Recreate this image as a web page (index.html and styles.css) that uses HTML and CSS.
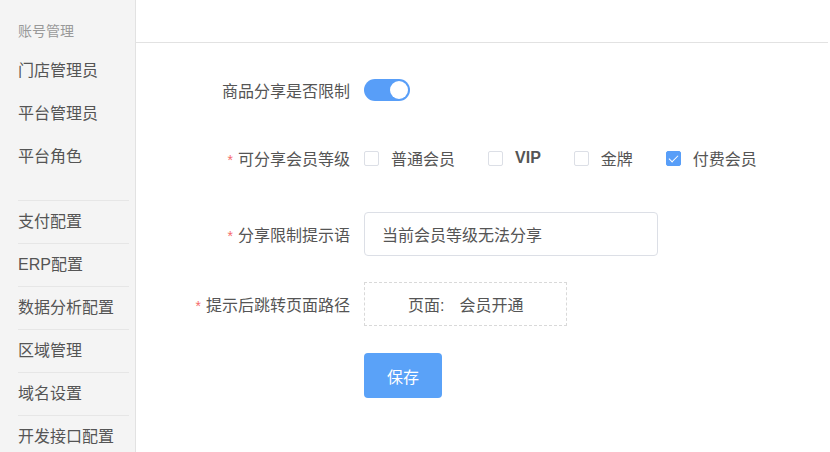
FILE: index.html
```html
<!DOCTYPE html>
<html lang="zh-CN">
<head>
    <meta charset="UTF-8">
    <meta name="viewport" content="width=device-width, initial-scale=1.0">
    <title>商品分享设置</title>
    <link rel="stylesheet" href="styles.css">
</head>
<body>
    <aside class="sidebar">
        <div class="menu-title">账号管理</div>
        <ul class="menu">
            <li>门店管理员</li>
            <li>平台管理员</li>
            <li>平台角色</li>
        </ul>
        <ul class="menu menu-lined">
            <li>支付配置</li>
            <li>ERP配置</li>
            <li>数据分析配置</li>
            <li>区域管理</li>
            <li>域名设置</li>
            <li>开发接口配置</li>
        </ul>
    </aside>

    <main class="main">
        <div class="topbar"></div>

        <form class="form" id="share-form">
            <div class="form-item item-switch">
                <label class="form-label">商品分享是否限制</label>
                <div class="form-control">
                    <span class="switch is-on" id="share-switch"><span class="switch-knob"></span></span>
                </div>
            </div>

            <div class="form-item item-levels">
                <label class="form-label"><span class="required">*</span>可分享会员等级</label>
                <div class="form-control">
                    <label class="checkbox"><span class="checkbox-box"></span>普通会员</label>
                    <label class="checkbox"><span class="checkbox-box"></span><b class="vip">VIP</b></label>
                    <label class="checkbox"><span class="checkbox-box"></span>金牌</label>
                    <label class="checkbox is-checked"><span class="checkbox-box"></span>付费会员</label>
                </div>
            </div>

            <div class="form-item item-tip">
                <label class="form-label"><span class="required">*</span>分享限制提示语</label>
                <div class="form-control">
                    <input class="text-input" type="text" value="当前会员等级无法分享">
                </div>
            </div>

            <div class="form-item item-path">
                <label class="form-label"><span class="required">*</span>提示后跳转页面路径</label>
                <div class="form-control">
                    <div class="path-box"><span class="path-key">页面:</span>会员开通</div>
                </div>
            </div>

            <div class="form-item item-save">
                <div class="form-label"></div>
                <div class="form-control">
                    <button type="button" class="btn-primary">保存</button>
                </div>
            </div>
        </form>
    </main>

    <script>
        document.getElementById('share-switch').addEventListener('click', function () {
            this.classList.toggle('is-on');
        });

        document.querySelectorAll('.checkbox').forEach(function (box) {
            box.addEventListener('click', function () {
                box.classList.toggle('is-checked');
            });
        });
    </script>
</body>
</html>
```

FILE: styles.css
```css
* {
    box-sizing: border-box;
}

body {
    margin: 0;
    padding: 0;
    display: flex;
    height: 100vh;
    overflow: hidden;
    font-family: "Liberation Sans", "Noto Sans CJK SC", sans-serif;
    font-size: 16px;
    color: #555;
    background: #fff;
}

/* 左侧菜单 */
.sidebar {
    width: 136px;
    flex-shrink: 0;
    background-color: #f4f4f4;
    border-right: 1px solid #e2e2e2;
    padding-top: 13px;
}

.menu-title {
    height: 36px;
    line-height: 36px;
    padding-left: 18px;
    font-size: 14px;
    color: #999;
}

.menu {
    list-style: none;
    margin: 0;
    padding: 0;
}

.menu li {
    height: 43px;
    line-height: 43px;
    margin: 0 6px 0 18px;
    white-space: nowrap;
    cursor: pointer;
}

.menu-lined {
    margin-top: 22px;
}

.menu-lined li {
    border-top: 1px solid #e6e6e6;
    line-height: 42px;
}

/* 右侧内容 */
.main {
    flex: 1;
    margin-right: 2px;
}

.topbar {
    height: 43px;
    border-bottom: 1px solid #e2e2e2;
}

.form {
    padding-left: 14px;
}

.form-item {
    display: flex;
    align-items: center;
}

.form-label {
    width: 214px;
    flex-shrink: 0;
    padding-right: 14px;
    text-align: right;
    white-space: nowrap;
}

.form-control {
    display: flex;
    align-items: center;
}

.item-switch {
    height: 22px;
    margin-top: 36px;
}

.item-levels {
    height: 22px;
    margin-top: 46px;
}

.item-tip {
    height: 44px;
    margin-top: 43px;
}

.item-path {
    height: 44px;
    margin-top: 26px;
}

.item-save {
    margin-top: 27px;
}

.required {
    color: #f56c6c;
    font-size: 14px;
    margin-right: 5px;
}

/* 开关 */
.switch {
    position: relative;
    display: inline-block;
    width: 46px;
    height: 22px;
    border-radius: 11px;
    background-color: #dcdfe6;
    cursor: pointer;
}

.switch.is-on {
    background-color: #589ef8;
}

.switch-knob {
    position: absolute;
    top: 2px;
    left: 2px;
    width: 18px;
    height: 18px;
    border-radius: 50%;
    background: #fff;
}

.switch.is-on .switch-knob {
    left: 26px;
}

/* 复选框 */
.checkbox {
    display: flex;
    align-items: center;
    margin-right: 33px;
    cursor: pointer;
    white-space: nowrap;
}

.checkbox-box {
    width: 15px;
    height: 15px;
    margin-right: 12px;
    border: 1px solid #dcdfe6;
    border-radius: 2px;
    background: #fff;
    position: relative;
}

.checkbox.is-checked .checkbox-box {
    background-color: #589ef8;
    border-color: #589ef8;
}

.checkbox.is-checked .checkbox-box::after {
    content: "";
    position: absolute;
    left: 4px;
    top: 1px;
    width: 4px;
    height: 8px;
    border: solid #fff;
    border-width: 0 1.5px 1.5px 0;
    transform: rotate(45deg);
}

.vip {
    font-weight: bold;
}

/* 输入框 */
.text-input {
    width: 294px;
    height: 44px;
    padding: 0 17px;
    border: 1px solid #dcdfe6;
    border-radius: 4px;
    font-family: inherit;
    font-size: 16px;
    color: #555;
    outline: none;
}

.path-box {
    width: 203px;
    height: 44px;
    display: flex;
    align-items: center;
    padding-left: 43px;
    border: 1px dashed #d9d9d9;
}

.path-key {
    margin-right: 15px;
}

/* 按钮 */
.btn-primary {
    width: 78px;
    height: 45px;
    border: none;
    border-radius: 4px;
    background-color: #5aa2f8;
    color: #fff;
    font-family: inherit;
    font-size: 16px;
    cursor: pointer;
}

.btn-primary:hover {
    background-color: #4a94ee;
}
```
